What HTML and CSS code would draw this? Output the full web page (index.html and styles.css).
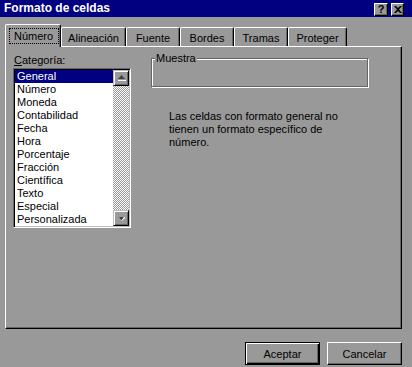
FILE: index.html
```html
<!DOCTYPE html>
<html lang="es">
<head>
<meta charset="utf-8">
<title>Formato de celdas</title>
<link rel="stylesheet" href="styles.css">
</head>
<body>
<div class="window">
  <div class="titlebar">
    <span class="title">Formato de celdas</span>
    <div class="tbtns">
      <span class="tbtn help">?</span>
      <span class="tbtn close"><svg width="8" height="7" viewBox="0 0 8 7"><path d="M0 0h2l2 2 2-2h2L5 3.5 8 7H6L4 5 2 7H0l3-3.5z" fill="#000"/></svg></span>
    </div>
  </div>
  <div class="content">
    <div class="tabs">
      <div class="tab sel"><span class="focus">Número</span></div>
      <div class="tab t-alin">Alineación</div>
      <div class="tab t-fuente">Fuente</div>
      <div class="tab t-bordes">Bordes</div>
      <div class="tab t-tramas">Tramas</div>
      <div class="tab t-prot">Proteger</div>
    </div>
    <div class="panel">
      <div class="left">
        <div class="lbl"><u>C</u>ategoría:</div>
        <div class="listbox">
          <ul class="items">
            <li class="selitem">General</li>
            <li>Número</li>
            <li>Moneda</li>
            <li>Contabilidad</li>
            <li>Fecha</li>
            <li>Hora</li>
            <li>Porcentaje</li>
            <li>Fracción</li>
            <li>Científica</li>
            <li>Texto</li>
            <li>Especial</li>
            <li>Personalizada</li>
          </ul>
          <div class="scroll">
            <div class="arrow"><svg width="9" height="6" viewBox="0 0 9 6"><path d="M4.5 0L8 4H1z" fill="#404040"/><path d="M1 5h8v1H1z" fill="#fff"/></svg></div>
            <div class="track"></div>
            <div class="arrow"><svg width="9" height="7" viewBox="0 0 9 7"><path d="M2 2h6L5 6z" fill="#404040"/><path d="M7 2h1v1L5 6H4z" fill="#fff"/></svg></div>
          </div>
        </div>
      </div>
      <div class="right">
        <div class="group"><span class="legend">Muestra</span></div>
        <p class="desc">Las celdas con formato general no<br>tienen un formato específico de<br>número.</p>
      </div>
    </div>
    <div class="buttons">
      <button class="btn default">Aceptar</button>
      <button class="btn">Cancelar</button>
    </div>
  </div>
</div>
</body>
</html>
```

FILE: styles.css
```css
html, body {
  margin: 0;
  padding: 0;
  background: #999999;
}

.window {
  width: 412px;
  height: 367px;
  background: #999999;
  font-family: "Liberation Sans", Arial, sans-serif;
  font-size: 11px;
  color: #000;
  display: flex;
  flex-direction: column;
  overflow: hidden;
}

.titlebar {
  height: 17px;
  background: #000080;
  display: flex;
  align-items: center;
  justify-content: space-between;
  padding: 0 8px 0 4px;
  flex: none;
}

.title {
  color: #fff;
  font-weight: bold;
  font-size: 12px;
  line-height: 17px;
}

.tbtns {
  display: flex;
  gap: 3px;
  margin-top: 1px;
}

.tbtn {
  width: 14px;
  height: 13px;
  box-sizing: border-box;
  background: #999999;
  border: 1px solid;
  border-color: #fff #000 #000 #fff;
  box-shadow: inset -1px -1px 0 #666;
  display: flex;
  align-items: center;
  justify-content: center;
  font-weight: bold;
  font-size: 11px;
  line-height: 1;
}

.close {
  width: 13px;
}

.content {
  flex: 1;
  padding: 7px 10px 0 5px;
  display: flex;
  flex-direction: column;
}

.tabs {
  display: flex;
  align-items: flex-end;
  height: 22px;
}

.tab {
  box-sizing: border-box;
  height: 19px;
  border-top: 1px solid #fff;
  border-left: 1px solid #fff;
  border-right: 1px solid #000;
  box-shadow: inset -1px 0 0 #666;
  border-radius: 2px 2px 0 0;
  display: flex;
  align-items: center;
  justify-content: center;
  padding-top: 1px;
}

.tab.sel {
  width: 56px;
  height: 23px;
  margin-bottom: -1px;
  position: relative;
  z-index: 1;
  background: #999999;
  padding-top: 0;
}

.focus {
  display: block;
  width: 50px;
  height: 16px;
  box-sizing: border-box;
  border: 1px dotted #000;
  text-align: center;
  line-height: 14px;
  margin-left: 1px;
}

.t-alin { width: 65px; }
.t-fuente { width: 54px; }
.t-bordes { width: 54px; }
.t-tramas { width: 54px; }
.t-prot { width: 59px; }

.panel {
  box-sizing: border-box;
  width: 397px;
  height: 283px;
  border: 1px solid;
  border-color: #fff #000 #000 #fff;
  box-shadow: inset -1px -1px 0 #666;
  padding: 7px 0 0 7px;
  display: grid;
  grid-template-columns: 118px 217px;
  column-gap: 20px;
  align-items: start;
}

.lbl {
  height: 13px;
  line-height: 13px;
  padding-left: 1px;
  margin-bottom: 1px;
}

.listbox {
  box-sizing: border-box;
  width: 118px;
  height: 160px;
  border: 1px solid;
  border-color: #666 #fff #fff #666;
  box-shadow: inset 1px 1px 0 #000, inset -1px -1px 0 #bdbdbd;
  padding: 1px;
  display: flex;
  background: #fff;
}

.items {
  list-style: none;
  margin: 0;
  padding: 0;
  flex: 1;
  background: #fff;
}

.items li {
  height: 13px;
  line-height: 13px;
  padding-left: 2px;
  white-space: nowrap;
}

.items .selitem {
  background: #000080;
  color: #fff;
}

.scroll {
  width: 16px;
  display: flex;
  flex-direction: column;
}

.arrow {
  box-sizing: border-box;
  width: 16px;
  height: 16px;
  background: #999999;
  border: 1px solid;
  border-color: #bdbdbd #000 #000 #bdbdbd;
  box-shadow: inset 1px 1px 0 #fff, inset -1px -1px 0 #666;
  display: flex;
  align-items: center;
  justify-content: center;
}

.track {
  flex: 1;
  background: repeating-conic-gradient(#fff 0 25%, #999 0 50%) 0 0 / 2px 2px;
}

.right {
  display: flex;
  flex-direction: column;
}

.group {
  box-sizing: border-box;
  position: relative;
  margin-top: 4px;
  width: 217px;
  height: 29px;
  border: 1px solid #666;
  box-shadow: 1px 1px 0 #fff, inset 1px 1px 0 #fff;
}

.legend {
  position: absolute;
  left: 3px;
  top: -7px;
  background: #999999;
  padding: 0 1px;
  line-height: 13px;
}

.desc {
  margin: 23px 0 0 18px;
  line-height: 13px;
  white-space: nowrap;
}

.buttons {
  display: flex;
  justify-content: flex-end;
  gap: 7px;
  margin-top: 13px;
}

.btn {
  box-sizing: border-box;
  width: 75px;
  height: 23px;
  margin: 0;
  padding: 0;
  font-family: "Liberation Sans", Arial, sans-serif;
  font-size: 11px;
  color: #000;
  background: #999999;
  border: 1px solid;
  border-color: #fff #000 #000 #fff;
  box-shadow: inset -1px -1px 0 #666;
  border-radius: 0;
}

.btn.default {
  border: 1px solid #000;
  box-shadow: inset 1px 1px 0 #fff, inset -1px -1px 0 #000, inset -2px -2px 0 #666;
}
```
